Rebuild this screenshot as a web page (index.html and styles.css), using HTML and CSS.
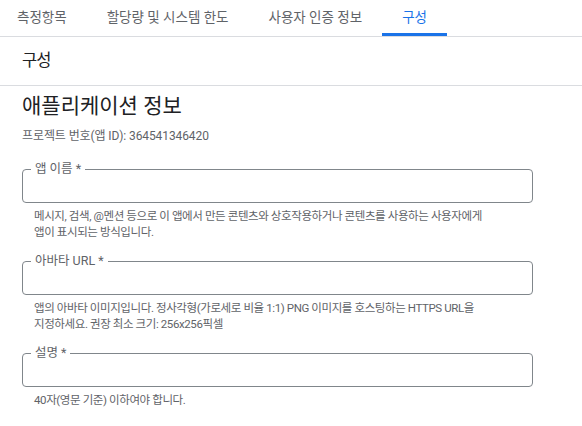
FILE: index.html
```html
<!DOCTYPE html>
<html lang="ko">
<head>
    <meta charset="UTF-8">
    <meta name="viewport" content="width=device-width, initial-scale=1.0">
    <title>구성</title>
    <link rel="stylesheet" href="styles.css">
</head>
<body>
    <nav class="tabs">
        <a class="tab">측정항목</a>
        <a class="tab">할당량 및 시스템 한도</a>
        <a class="tab">사용자 인증 정보</a>
        <a class="tab active">구성</a>
    </nav>

    <div class="page-title">구성</div>

    <div class="content">
        <h1>애플리케이션 정보</h1>
        <p class="project-id">프로젝트 번호(앱 ID): 364541346420</p>

        <div class="field">
            <fieldset class="outline">
                <legend>앱 이름 *</legend>
                <input type="text">
            </fieldset>
            <p class="hint">메시지, 검색, @멘션 등으로 이 앱에서 만든 콘텐츠와 상호작용하거나 콘텐츠를 사용하는 사용자에게<br>앱이 표시되는 방식입니다.</p>
        </div>

        <div class="field">
            <fieldset class="outline">
                <legend>아바타 URL *</legend>
                <input type="text">
            </fieldset>
            <p class="hint">앱의 아바타 이미지입니다. 정사각형(가로세로 비율 1:1) PNG 이미지를 호스팅하는 HTTPS URL을<br>지정하세요. 권장 최소 크기: 256x256픽셀</p>
        </div>

        <div class="field">
            <fieldset class="outline">
                <legend>설명 *</legend>
                <input type="text">
            </fieldset>
            <p class="hint">40자(영문 기준) 이하여야 합니다.</p>
        </div>
    </div>
</body>
</html>
```

FILE: styles.css
```css
body {
    font-family: Roboto, 'Noto Sans CJK KR', sans-serif;
    background-color: #ffffff;
    color: #202124;
    margin: 0;
    padding: 0;
}
.tabs {
    display: flex;
    height: 36px;
    margin-left: -3px;
    padding-right: 3px;
    border-bottom: 1px solid #dadce0;
}
.tab {
    display: block;
    padding: 0 20px;
    height: 36px;
    line-height: 34px;
    box-sizing: border-box;
    font-size: 13.5px;
    color: #5f6368;
    border-bottom: 3px solid transparent;
    cursor: pointer;
}
.tab.active {
    color: #1a73e8;
    border-bottom-color: #1a73e8;
}
.page-title {
    height: 48px;
    line-height: 48px;
    padding-left: 22px;
    font-size: 16.5px;
    letter-spacing: -1px;
    color: #202124;
    border-bottom: 1px solid #dadce0;
}
.content {
    padding: 8px 22px 0 22px;
    max-width: 511px;
}
h1 {
    margin: 0;
    font-size: 21px;
    font-weight: 400;
    line-height: 24px;
}
.project-id {
    margin: 10px 0 19px;
    font-size: 12px;
    line-height: 16px;
    letter-spacing: -0.1px;
    color: #5f6368;
}
.field {
    margin-bottom: 15px;
}
.outline {
    margin: 0;
    padding: 0 8px;
    border: 1px solid #80868b;
    border-radius: 4px;
}
.outline legend {
    padding: 0 4px;
    font-size: 12.5px;
    line-height: 12px;
    color: #5f6368;
}
.outline input {
    display: block;
    width: 100%;
    height: 27px;
    box-sizing: border-box;
    border: none;
    outline: none;
    padding: 0 4px;
    background: transparent;
    font-family: inherit;
    font-size: 14px;
}
.hint {
    margin: 5px 0 0;
    padding-left: 12px;
    font-size: 11.5px;
    line-height: 16px;
    letter-spacing: -0.4px;
    color: #5f6368;
}
```
